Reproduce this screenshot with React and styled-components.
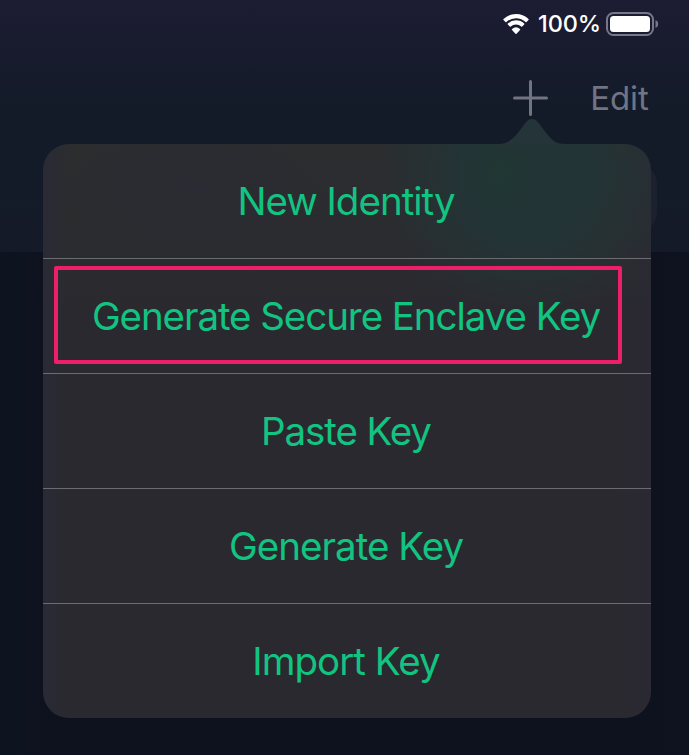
import React from "react";
import styled, { createGlobalStyle } from "styled-components";

const GlobalStyle = createGlobalStyle`
  * { box-sizing: border-box; }
  body { margin: 0; background: #0e121e; overflow: hidden; }
`;

const Screen = styled.main`
  position: relative;
  width: 689px;
  height: 755px;
  overflow: hidden;
  font-family: Inter, "Liberation Sans", sans-serif;
  background: linear-gradient(90deg, #0c1420 0, #0e121e 45px, #0e121e 655px, #0d131f 100%);
`;

const Header = styled.header`
  height: 252px;
  background: linear-gradient(180deg, #1c1c32 0, #191b2f 45px, #131b29 105px, #131b29 190px, #151928 100%);
`;

const StatusBar = styled.div`
  display: flex;
  justify-content: flex-end;
  align-items: center;
  height: 48px;
  padding-right: 30px;
  color: #fff;
`;

const BatteryLevel = styled.span`
  margin: 0 6px 0 8px;
  width: 62px;
  font-size: 23.5px;
  font-weight: 500;
  line-height: 28px;
  letter-spacing: -0.1px;
  white-space: nowrap;
`;

const NavBar = styled.nav`
  display: flex;
  justify-content: flex-end;
  align-items: center;
  height: 100px;
  padding-right: 40px;
  gap: 42px;
  color: #717482;
`;

const EditButton = styled.button`
  border: 0;
  padding: 0;
  width: 59px;
  background: none;
  color: inherit;
  font: 400 33px/40px Inter, "Liberation Sans", sans-serif;
  letter-spacing: -0.1px;
  white-space: nowrap;
`;

const SearchEdge = styled.div`
  position: absolute;
  right: 32px;
  top: 164px;
  width: 80px;
  height: 68px;
  border-radius: 20px;
  background: #1d202e;
`;

const Popover = styled.section`
  position: absolute;
  left: 43px;
  top: 144px;
  width: 608px;
`;

const Arrow = styled.svg`
  position: absolute;
  left: 455px;
  top: -26px;
`;

const MenuList = styled.ul`
  display: grid;
  grid-template-rows: repeat(4, 115px) 114px;
  height: 574px;
  margin: 0;
  padding: 0;
  list-style: none;
  overflow: hidden;
  border-radius: 26px;
  background:
    radial-gradient(ellipse 45px 50px at 456px 30px, #1e3b3080, transparent),
    radial-gradient(ellipse 150px 145px at 485px 30px, #233436 0, #233436 45%, transparent 100%),
    radial-gradient(ellipse 130px 70px at 150px 45px, #2a293599, transparent),
    linear-gradient(90deg, #2a2a36 0, transparent 25px, transparent 570px, #2a2a36aa 100%),
    linear-gradient(180deg, #2b2d2f 0, #2b2c2f 100px, #2a292f 170px, #2a292f 100%);
`;

const MenuItem = styled.li`
  position: relative;
  display: flex;
  align-items: center;
  justify-content: center;
  padding-right: 2px;
  border-bottom: 1px solid #6b6c71;
  color: #12c481;
  font-size: 38.5px;
  line-height: 48px;
  letter-spacing: ${(p) => p.$tracking}px;
  white-space: nowrap;
  &:last-child { border-bottom: 0; }
`;

const Highlight = styled.span`
  position: absolute;
  left: 11px;
  top: 7px;
  width: 568px;
  height: 98px;
  border: 4px solid #ee1f68;
  border-radius: 2px;
`;

const WifiIcon = () => (
  <svg width="28" height="21" viewBox="0 0 28 21" fill="#fff" aria-label="Wi-Fi">
    <path d="M14 4.2c3.7 0 7.1 1.5 9.6 3.9.3.3.6.3.9 0l2-2c.3-.3.3-.7 0-1a18 18 0 0 0-25 0c-.3.3-.3.7 0 1l2 2c.3.3.6.3.9 0A13.8 13.8 0 0 1 14 4.2Z" />
    <path d="M14 10.6c2 0 3.8.8 5.2 2 .3.3.7.3 1 0l2-2c.3-.3.3-.7 0-1a12 12 0 0 0-16.4 0c-.3.3-.3.7 0 1l2 2c.3.3.7.3 1 0 1.4-1.2 3.2-2 5.2-2Z" />
    <path d="M18 16c.3-.3.3-.7 0-1a6.2 6.2 0 0 0-8 0c-.3.3-.3.7 0 1l3.5 3.7c.3.3.7.3 1 0Z" />
  </svg>
);

const BatteryIcon = () => (
  <svg width="53" height="24" viewBox="0 0 53 24" aria-label="Battery full">
    <rect x="1" y="1" width="46" height="22" rx="6.5" fill="none" stroke="#777887" strokeWidth="2" />
    <rect x="4" y="4" width="40" height="16" rx="3.5" fill="#fff" />
    <path d="M49.5 8c3.6 1.2 3.6 6.8 0 8Z" fill="#777887" />
  </svg>
);

const PlusIcon = () => (
  <svg width="36" height="36" viewBox="0 0 36 36" stroke="currentColor" strokeWidth="3" strokeLinecap="round" aria-label="Add">
    <path d="M18.5 1.5v33M2.5 18h32" />
  </svg>
);

const items = [
  { label: "New Identity", tracking: -1 },
  { label: "Generate Secure Enclave Key", tracking: -1.07, highlighted: true },
  { label: "Paste Key", tracking: -1.1 },
  { label: "Generate Key", tracking: -0.95 },
  { label: "Import Key", tracking: -0.95 },
];

export default function App() {
  return (
    <Screen>
      <GlobalStyle />
      <Header>
        <StatusBar>
          <WifiIcon />
          <BatteryLevel>100%</BatteryLevel>
          <BatteryIcon />
        </StatusBar>
        <NavBar>
          <PlusIcon />
          <EditButton>Edit</EditButton>
        </NavBar>
      </Header>
      <SearchEdge />
      <Popover>
        <Arrow width="68" height="27" viewBox="0 0 68 27">
          <path d="M0 27V26C10 26 13 22 19 16C25 9 28 1 34 1C40 1 43 9 49 16C55 23 58 26 68 26V27Z" fill="#243438" />
        </Arrow>
        <MenuList>
          {items.map((item) => (
            <MenuItem key={item.label} $tracking={item.tracking}>
              {item.label}
              {item.highlighted && <Highlight />}
            </MenuItem>
          ))}
        </MenuList>
      </Popover>
    </Screen>
  );
}
